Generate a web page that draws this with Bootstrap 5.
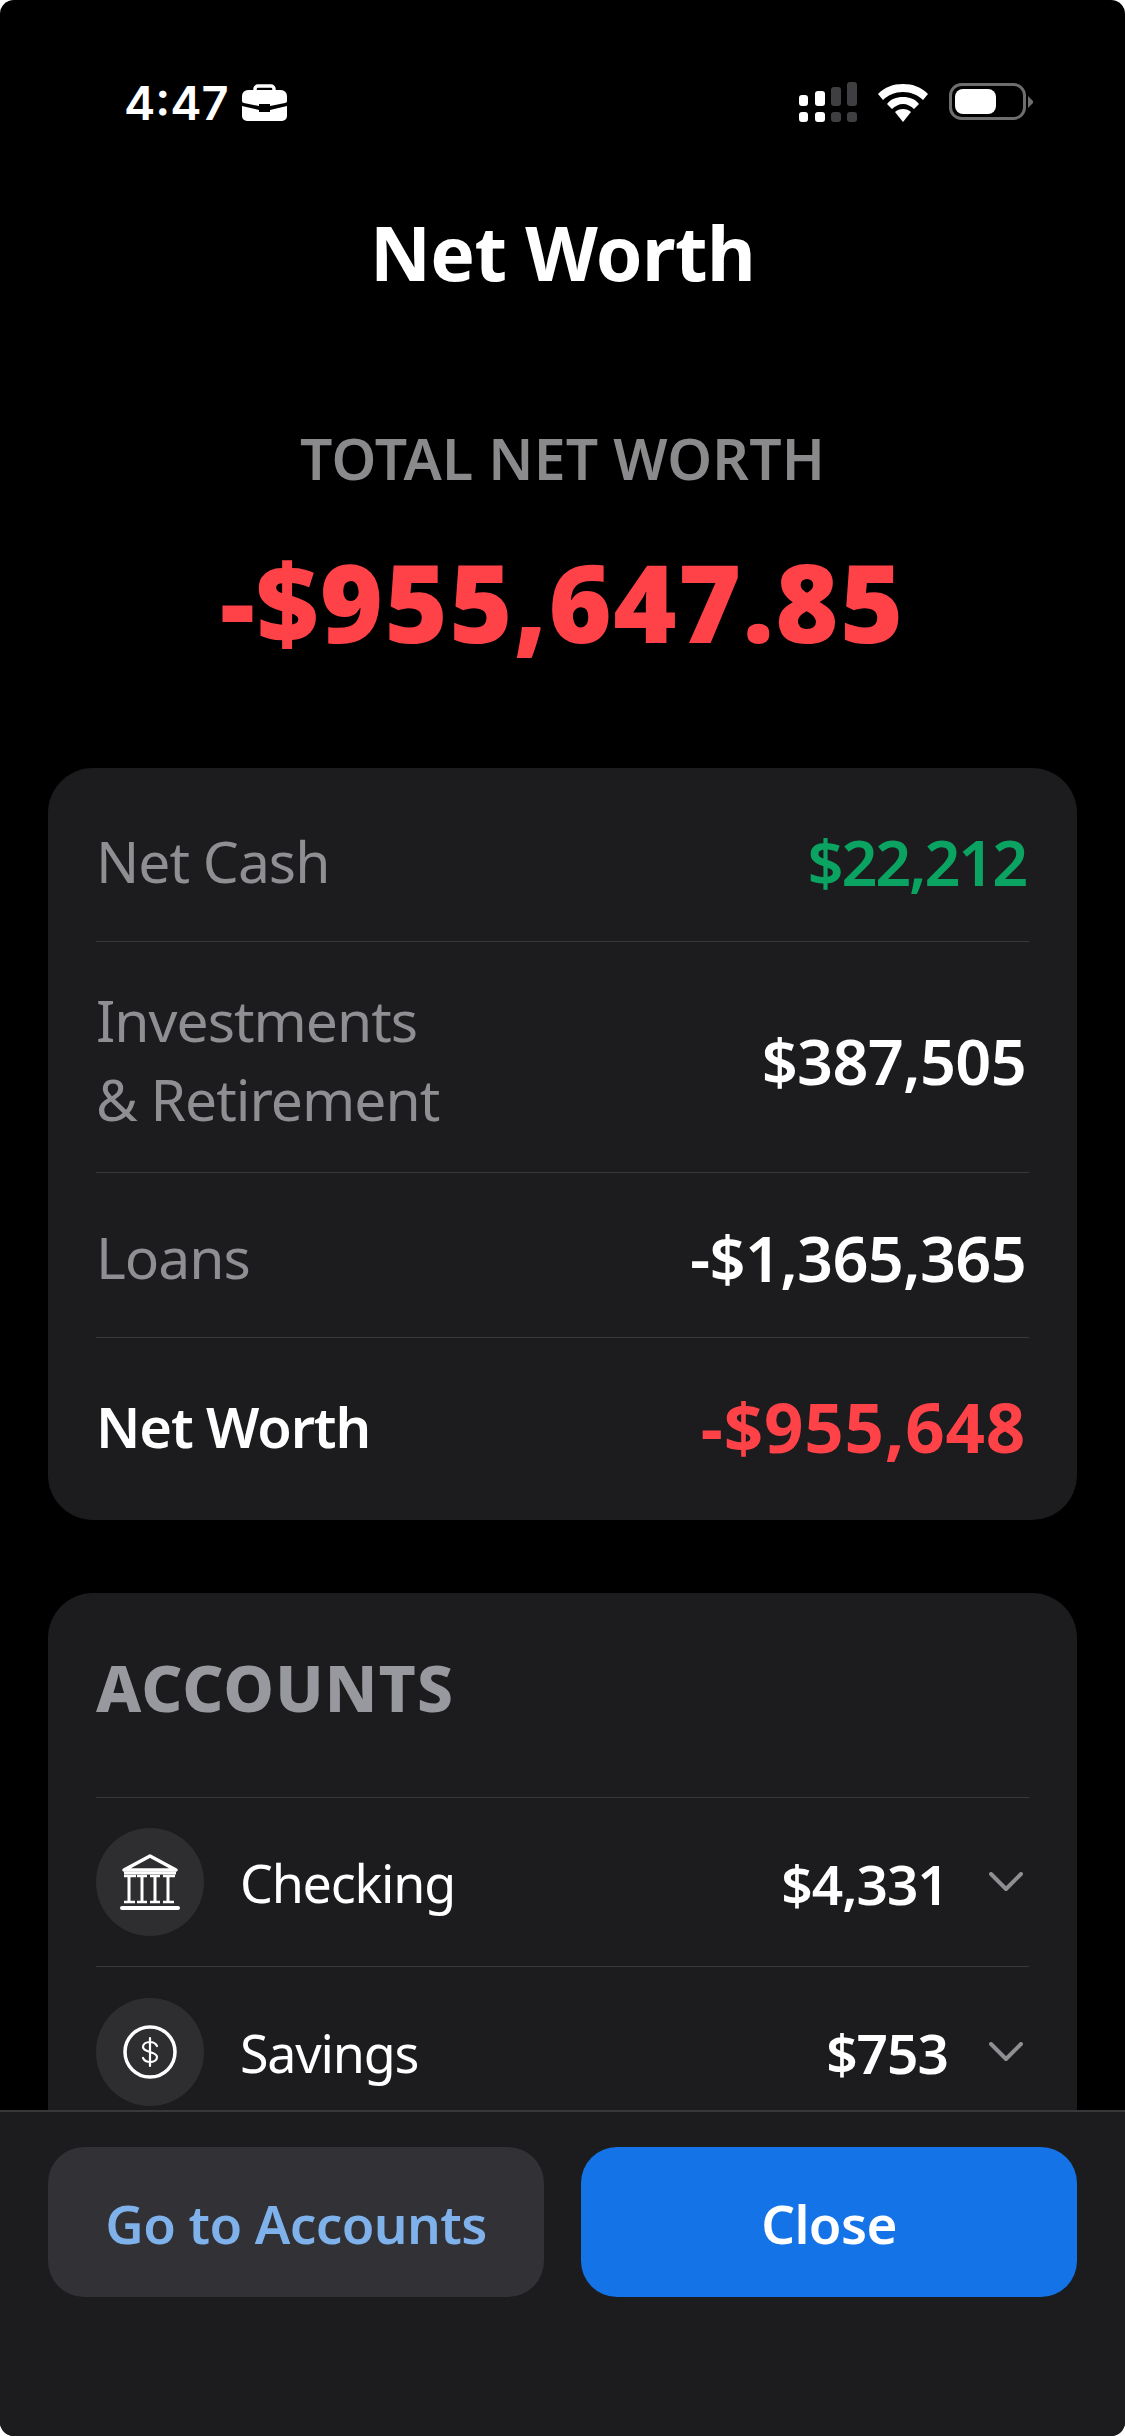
<!DOCTYPE html>
<html lang="en">
<head>
<meta charset="utf-8">
<title>Net Worth</title>
<link href="https://cdn.jsdelivr.net/npm/bootstrap@5.3.0/dist/css/bootstrap.min.css" rel="stylesheet">
<style>
html,body{background:#fff;margin:0;padding:0}
body{font-family:"Noto Sans","Open Sans","Liberation Sans",sans-serif;color:#fff}
.phone{width:1125px;height:2436px;background:#000;border-radius:14px;overflow:hidden;position:relative}
.statusbar{height:127px;padding:79px 92px 0 124px}
.clock{font-family:"Inter","Liberation Sans",sans-serif;font-size:47px;font-weight:600;line-height:1}
.clock-group{gap:13px}
.stat-icons{gap:21px;margin-top:3px}
.page-title{font-size:75px;font-weight:700;line-height:1;margin:0;padding-top:88px;letter-spacing:-.6px}
.total-label{font-size:57px;font-weight:600;color:#8a8a8c;line-height:1;margin-top:140px;letter-spacing:.2px}
.total-value{font-size:108px;font-weight:900;color:#ff4248;line-height:1;margin-top:61px;letter-spacing:1.4px}
.sheet{background:#1c1c1e;border-radius:45px;margin:0 48px;padding:0 48px}
.sheet-a{margin-top:112px}
.sheet-b{margin-top:73px;padding-top:63px;padding-bottom:60px}
.line-row{border-bottom:1px solid #38383a}
.line-row:last-child{border-bottom:0}
.h-a{height:174px;padding-top:14px}
.h-b{height:231px;padding-top:6px}
.h-c{height:165px;padding-top:4px}
.h-d{height:182px;padding-bottom:5px}
.lbl{font-size:57px;color:#8e8e93;line-height:79px;letter-spacing:-1px}
.lbl-strong{color:#fff;font-weight:600;font-size:56px;letter-spacing:-1.1px}
.val{font-size:63px;font-weight:600;line-height:1;letter-spacing:-.7px;margin-right:3px}
.val-green{color:#0aa361;letter-spacing:-2.200px}
.val-red{color:#ff4248;font-size:69px;font-weight:700;letter-spacing:.8px}
.sect-title{font-size:64px;font-weight:800;color:#98989f;line-height:1;height:142px;border-bottom:1px solid #38383a;letter-spacing:1.1px}
.acct{height:169px;border-bottom:1px solid #38383a;padding:30px 0}
.acct-end{border-bottom:0}
.disc{width:108px;height:108px;border-radius:50%;background:#2e2e31;flex:none}
.acct-name{font-size:52px;margin-left:36px;letter-spacing:-1.200px;line-height:1;padding-top:2px}
.acct-val{font-size:55px;font-weight:600;letter-spacing:-1px;line-height:1;padding-top:2px}
.chev{margin-left:41px;margin-right:6px;flex:none}
.footbar{position:absolute;left:0;right:0;bottom:0;height:326px;background:#1c1c1e;border-top:2px solid #38383a;padding:35px 48px 0;gap:37px}
.act{flex:1 1 0;height:150px;border-radius:36px;border:0;font-size:53px;font-weight:600;line-height:1;letter-spacing:-.6px;padding:2px 0 0}
.act-dark,.act-dark:hover{background:#313136;color:#7fb1ea}
.act-blue,.act-blue:hover{background:#1473e6;color:#fff}
</style>
</head>
<body>
<div class="phone">
  <div class="statusbar d-flex align-items-start justify-content-between">
    <div class="clock-group d-flex align-items-center">
      <span class="clock">4:47</span>
      <svg width="45" height="37" viewBox="0 0 45 37"><path fill="none" stroke="#fff" stroke-width="3.500" d="M13 8V5a3 3 0 0 1 3-3h13a3 3 0 0 1 3 3v3"/><path fill="#fff" d="M6 6h33a6 6 0 0 1 6 6v5c0 1-1 2-2 2l-15 3v-2H17v2L2 19c-1 0-2-1-2-2v-5a6 6 0 0 1 6-6z"/><path fill="#fff" d="M0 22l17 4v2h11v-2l17-4v10a5 5 0 0 1-5 5H5a5 5 0 0 1-5-5z"/></svg>
    </div>
    <div class="stat-icons d-flex align-items-end">
      <svg width="58" height="40" viewBox="0 0 58 40"><g fill="#fff"><rect x="0" y="13" width="9" height="11" rx="3"/><rect x="0" y="30" width="9" height="10" rx="3"/><rect x="16" y="9" width="10" height="15" rx="3"/><rect x="16" y="30" width="10" height="10" rx="3"/></g><g fill="#3f3f41"><rect x="32" y="5" width="10" height="19" rx="3"/><rect x="32" y="30" width="10" height="10" rx="3"/><rect x="48" y="0" width="10" height="24" rx="3"/><rect x="48" y="30" width="10" height="10" rx="3"/></g></svg>
      <svg width="50" height="38" viewBox="0 0 50 38"><path fill="#fff" d="M25 0C15 0 7 3 0 10l5 6C10 11 17 8 25 8s15 3 20 8l5-6C43 3 35 0 25 0z"/><path fill="#fff" d="M25 13c-7 0-12 2-16 7l5 5c3-3 7-5 11-5s8 2 11 5l5-5c-4-5-9-7-16-7z"/><path fill="#fff" d="M25 25c-3 0-6 1-8 3l8 10 8-10c-2-2-5-3-8-3z"/></svg>
      <svg width="84" height="40" viewBox="0 0 84 40"><rect x="1.500" y="2.500" width="74" height="34" rx="11" fill="none" stroke="#6e6e70" stroke-width="3"/><rect x="6" y="7" width="41" height="25" rx="8" fill="#fff"/><path fill="#6e6e70" d="M79 14l5 5v2l-5 5z"/></svg>
    </div>
  </div>
  <h1 class="page-title text-center">Net Worth</h1>
  <div class="total-label text-center">TOTAL NET WORTH</div>
  <div class="total-value text-center">-$955,647.85</div>

  <div class="sheet sheet-a">
    <div class="line-row h-a d-flex align-items-center justify-content-between"><span class="lbl">Net Cash</span><span class="val val-green">$22,212</span></div>
    <div class="line-row h-b d-flex align-items-center justify-content-between"><span class="lbl">Investments<br>&amp; Retirement</span><span class="val">$387,505</span></div>
    <div class="line-row h-c d-flex align-items-center justify-content-between"><span class="lbl">Loans</span><span class="val">-$1,365,365</span></div>
    <div class="line-row h-d d-flex align-items-center justify-content-between"><span class="lbl lbl-strong">Net Worth</span><span class="val val-red">-$955,648</span></div>
  </div>

  <div class="sheet sheet-b">
    <div class="sect-title">ACCOUNTS</div>
    <div class="acct d-flex align-items-center">
      <div class="disc d-flex align-items-center justify-content-center">
        <svg width="60" height="56" viewBox="0 0 60 56"><g fill="none" stroke="#fff"><path stroke-width="3.500" stroke-linejoin="round" d="M4 16 30 2l26 14z"/><path stroke-width="3" d="M4 19h52"/><path stroke-width="3" d="M9 21v28M22 21v28M35 21v28M48 21v28"/><path stroke-width="2.500" d="M4 22h12M17 22h10M30 22h10M43 22h12M4 48h11M17 48h10M30 48h10M43 48h11"/><path stroke-width="4" stroke-linecap="round" d="M2 54h56"/></g></svg>
      </div>
      <span class="acct-name">Checking</span>
      <span class="acct-val ms-auto">$4,331</span>
      <svg class="chev" width="34" height="20" viewBox="0 0 34 20"><path fill="none" stroke="#8e8e93" stroke-width="4" stroke-linecap="round" stroke-linejoin="round" d="M2 2l15 15L32 2"/></svg>
    </div>
    <div class="acct acct-end d-flex align-items-center">
      <div class="disc d-flex align-items-center justify-content-center">
        <svg width="56" height="56" viewBox="0 0 56 56"><circle cx="28" cy="28" r="25" fill="none" stroke="#fff" stroke-width="3.500"/><path fill="none" stroke="#fff" stroke-width="2.200" stroke-linecap="round" d="M35 22c-1-2-3-4-7-4-4 0-7 2-7 5 0 6 14 4 14 10 0 3-3 5-7 5-4 0-6-2-7-4M28 14v28"/></svg>
      </div>
      <span class="acct-name">Savings</span>
      <span class="acct-val ms-auto">$753</span>
      <svg class="chev" width="34" height="20" viewBox="0 0 34 20"><path fill="none" stroke="#8e8e93" stroke-width="4" stroke-linecap="round" stroke-linejoin="round" d="M2 2l15 15L32 2"/></svg>
    </div>
  </div>

  <div class="footbar d-flex align-items-start">
    <button type="button" class="btn act act-dark">Go to Accounts</button>
    <button type="button" class="btn act act-blue">Close</button>
  </div>
</div>
<script src="https://cdn.jsdelivr.net/npm/bootstrap@5.3.0/dist/js/bootstrap.bundle.min.js"></script>
</body>
</html>
